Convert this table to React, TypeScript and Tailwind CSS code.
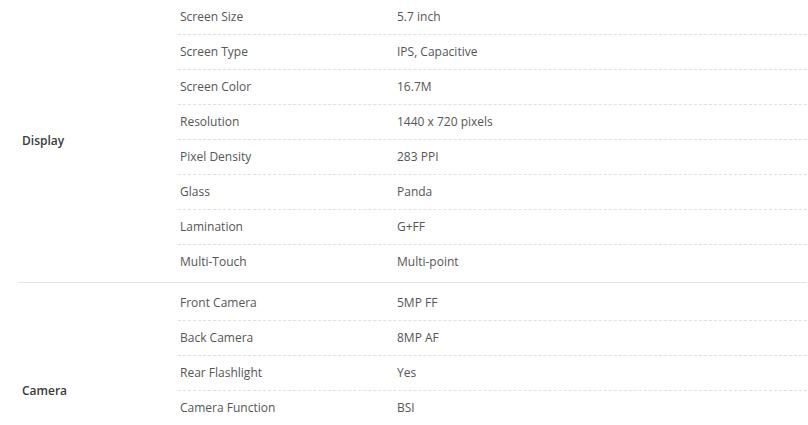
const groups = [
  {
    name: "Display",
    pad: "pb-[3px]",
    rows: [
      ["Screen Size", "5.7 inch"],
      ["Screen Type", "IPS, Capacitive"],
      ["Screen Color", "16.7M"],
      ["Resolution", "1440 x 720 pixels"],
      ["Pixel Density", "283 PPI"],
      ["Glass", "Panda"],
      ["Lamination", "G+FF"],
      ["Multi-Touch", "Multi-point"],
    ],
  },
  {
    name: "Camera",
    // the table goes on below the fold, keep the label centred like the original
    pad: "pt-[3px] pb-[74px]",
    rows: [
      ["Front Camera", "5MP FF"],
      ["Back Camera", "8MP AF"],
      ["Rear Flashlight", "Yes"],
      ["Camera Function", "BSI"],
    ],
  },
];

export default function App() {
  return (
    <div
      className="w-[808px] h-[425px] overflow-hidden bg-white pl-[19px] pr-[1px] text-[12px] leading-[18px]"
      style={{ fontFamily: "'Open Sans', 'Liberation Sans', sans-serif" }}
    >
      {groups.map((group) => (
        <div key={group.name} className="flex border-b border-[#e3e3e3]">
          <div className="w-[159px] shrink-0 flex items-center pl-[3px] text-[#3a3a3a] font-semibold">
            {group.name}
          </div>

          <div className={"flex-1 flex flex-col " + group.pad}>
            {group.rows.map(([label, value], i) => (
              <div
                key={label}
                className={
                  i === group.rows.length - 1
                    ? "flex items-center h-[34px] text-[#555]"
                    : "flex items-center h-[35px] border-b border-dashed border-[#e0e0e0] text-[#555]"
                }
              >
                <div className="w-[219px] shrink-0 pl-[2px]">{label}</div>
                <div>{value}</div>
              </div>
            ))}
          </div>
        </div>
      ))}
    </div>
  );
}
